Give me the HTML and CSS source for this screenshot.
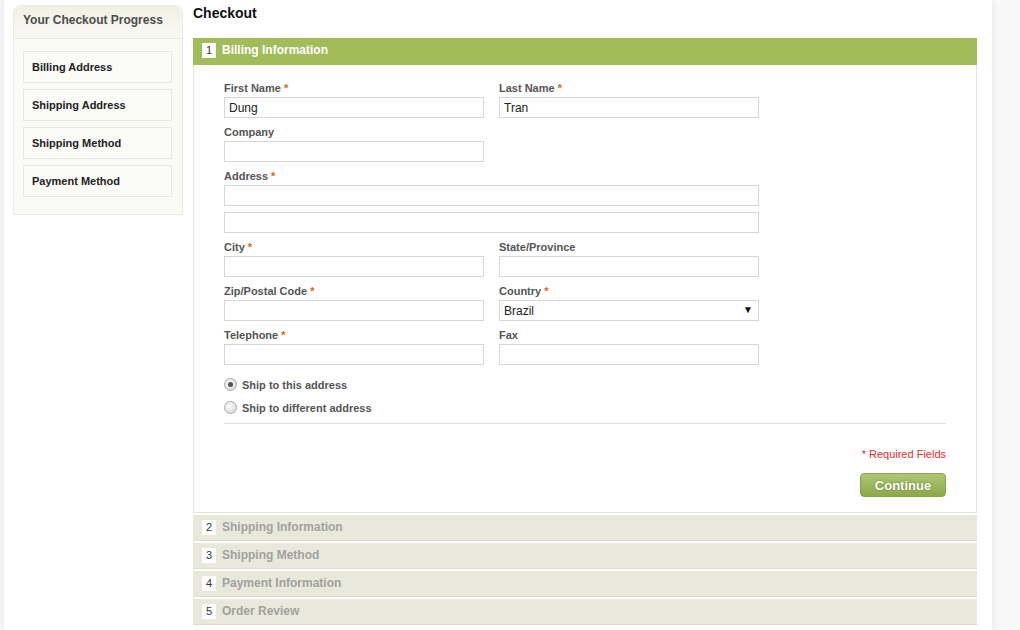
FILE: index.html
```html
<!DOCTYPE html>
<html lang="en">
<head>
 <meta charset="UTF-8">
 <title>Checkout</title>
 <link rel="stylesheet" href="styles.css">
</head>
<body>
<div class="page">
 <div class="sidebar">
  <div class="sidebar-title">Your Checkout Progress</div>
  <ul class="progress">
   <li>Billing Address</li>
   <li>Shipping Address</li>
   <li>Shipping Method</li>
   <li>Payment Method</li>
  </ul>
 </div>

 <div class="main">
  <h1>Checkout</h1>

  <div class="step active">
   <div class="step-head"><span class="num">1</span>Billing Information</div>
   <div class="step-body">
    <div class="row">
     <div class="field">
      <label>First Name <em>*</em></label>
      <input type="text" value="Dung">
     </div>
     <div class="field">
      <label>Last Name <em>*</em></label>
      <input type="text" value="Tran">
     </div>
    </div>
    <div class="row">
     <div class="field">
      <label>Company</label>
      <input type="text">
     </div>
    </div>
    <div class="row wide">
     <div class="field">
      <label>Address <em>*</em></label>
      <input type="text">
      <input type="text" class="second">
     </div>
    </div>
    <div class="row">
     <div class="field">
      <label>City <em>*</em></label>
      <input type="text">
     </div>
     <div class="field">
      <label>State/Province</label>
      <input type="text">
     </div>
    </div>
    <div class="row">
     <div class="field">
      <label>Zip/Postal Code <em>*</em></label>
      <input type="text">
     </div>
     <div class="field">
      <label>Country <em>*</em></label>
      <div class="select">
       <select>
        <option>Brazil</option>
       </select>
      </div>
     </div>
    </div>
    <div class="row">
     <div class="field">
      <label>Telephone <em>*</em></label>
      <input type="text">
     </div>
     <div class="field">
      <label>Fax</label>
      <input type="text">
     </div>
    </div>

    <ul class="ship-options">
     <li><label><input type="radio" name="ship" checked> Ship to this address</label></li>
     <li><label><input type="radio" name="ship"> Ship to different address</label></li>
    </ul>

    <div class="buttons">
     <p class="required">* Required Fields</p>
     <button class="btn">Continue</button>
    </div>
   </div>
  </div>

  <div class="step"><div class="step-head"><span class="num">2</span>Shipping Information</div></div>
  <div class="step"><div class="step-head"><span class="num">3</span>Shipping Method</div></div>
  <div class="step"><div class="step-head"><span class="num">4</span>Payment Information</div></div>
  <div class="step"><div class="step-head"><span class="num">5</span>Order Review</div></div>
 </div>
</div>
</body>
</html>
```

FILE: styles.css
```css
*{
    margin: 0;
    padding: 0;
    box-sizing: border-box;
    font-family: 'Liberation Sans', Arial, sans-serif;
}
body{
    background-color: #f8f8f8;
    width: 1020px;
    height: 630px;
    overflow: hidden;
}
.page{
    display: flex;
    gap: 10px;
    width: 988px;
    height: 630px;
    margin-left: 4px;
    padding: 0 15px 0 9px;
    background-color: #fff;
    box-shadow: 0 0 8px rgba(0, 0, 0, .09);
}

/* sidebar */
.sidebar{
    width: 170px;
    height: 210px;
    margin-top: 5px;
    background-color: #fafaf6;
    border: 1px solid #ecebe2;
    border-radius: 8px 8px 0 0;
}
.sidebar-title{
    height: 33px;
    padding: 7px 0 0 9px;
    font-size: 12px;
    font-weight: bold;
    color: #4c4c4c;
    background: linear-gradient(#f1f0e6, #f9f9f4);
    border-bottom: 1px solid #e9e8dd;
    border-radius: 8px 8px 0 0;
}
.progress{
    list-style: none;
    padding: 12px 0 0 9px;
}
.progress li{
    width: 149px;
    height: 32px;
    margin-bottom: 6px;
    padding: 9px 0 0 8px;
    font-size: 11px;
    font-weight: bold;
    color: #222;
    background-color: #fbfbf8;
    border: 1px solid #e9e8de;
}

/* main */
.main{
    width: 784px;
}
.main h1{
    font-size: 14px;
    line-height: 26px;
    margin-bottom: 12px;
    color: #111;
}
.step-head{
    height: 26px;
    padding: 5px 0 0 9px;
    display: flex;
    align-items: flex-start;
    font-size: 12px;
    font-weight: bold;
    color: #a2a29e;
    background-color: #e9e8dc;
    border-bottom: 1px solid #dcdbce;
}
.step{
    margin-bottom: 2px;
}
.step .num{
    width: 14px;
    height: 15px;
    margin-right: 6px;
    background-color: #fff;
    color: #333;
    font-weight: normal;
    font-size: 11px;
    line-height: 15px;
    text-align: center;
}
.step.active .step-head{
    height: 27px;
    color: #fff;
    background-color: #a3bc5a;
    border-bottom: 0;
}
.step-body{
    height: 448px;
    padding: 15px 30px 0 30px;
    border: 1px solid #e5e4d8;
    border-top: 0;
}

/* form */
.row{
    display: flex;
    gap: 15px;
    margin-bottom: 6px;
}
.field{
    width: 260px;
}
.row.wide .field{
    width: 535px;
}
.field label{
    display: block;
    height: 16px;
    margin-bottom: 1px;
    font-size: 11px;
    line-height: 16px;
    font-weight: bold;
    color: #555;
}
.field label em{
    font-style: normal;
    color: #eb5e00;
}
.field input, .select select{
    display: block;
    width: 100%;
    height: 21px;
    padding: 0 4px;
    font-size: 12px;
    color: #222;
    border: 1px solid #d6d6d6;
    background-color: #fff;
    outline: none;
}
.field input.second{
    margin-top: 6px;
}
.select{
    position: relative;
}
.select select{
    appearance: none;
    -webkit-appearance: none;
    border-radius: 0;
}
.select::after{
    content: '\25BC';
    position: absolute;
    right: 6px;
    top: 4px;
    font-size: 10px;
    color: #111;
}

.ship-options{
    list-style: none;
    margin-top: 8px;
    padding-bottom: 4px;
    border-bottom: 1px solid #e1e1e1;
}
.ship-options li{
    height: 23px;
}
.ship-options label{
    display: flex;
    align-items: center;
    gap: 5px;
    height: 23px;
    font-size: 11px;
    font-weight: bold;
    color: #555;
}
.ship-options input{
    appearance: none;
    -webkit-appearance: none;
    width: 13px;
    height: 13px;
    border: 1px solid #a9a9a9;
    border-radius: 50%;
    background: radial-gradient(circle at 40% 35%, #fafafa, #d5d5d5);
    position: relative;
}
.ship-options input:checked::after{
    content: '';
    position: absolute;
    left: 3px;
    top: 3px;
    width: 5px;
    height: 5px;
    border-radius: 50%;
    background-color: #555;
}

.buttons{
    display: flex;
    flex-direction: column;
    align-items: flex-end;
}
.required{
    margin-top: 22px;
    font-size: 11px;
    line-height: 16px;
    color: #e42b1e;
}
.btn{
    margin-top: 11px;
    width: 86px;
    height: 24px;
    font-size: 13px;
    font-weight: bold;
    color: #fff;
    text-shadow: 0 0 2px #5d7229;
    background: linear-gradient(#adc674, #8ca84b);
    border: 1px solid #8aa64a;
    border-radius: 4px;
}
```
